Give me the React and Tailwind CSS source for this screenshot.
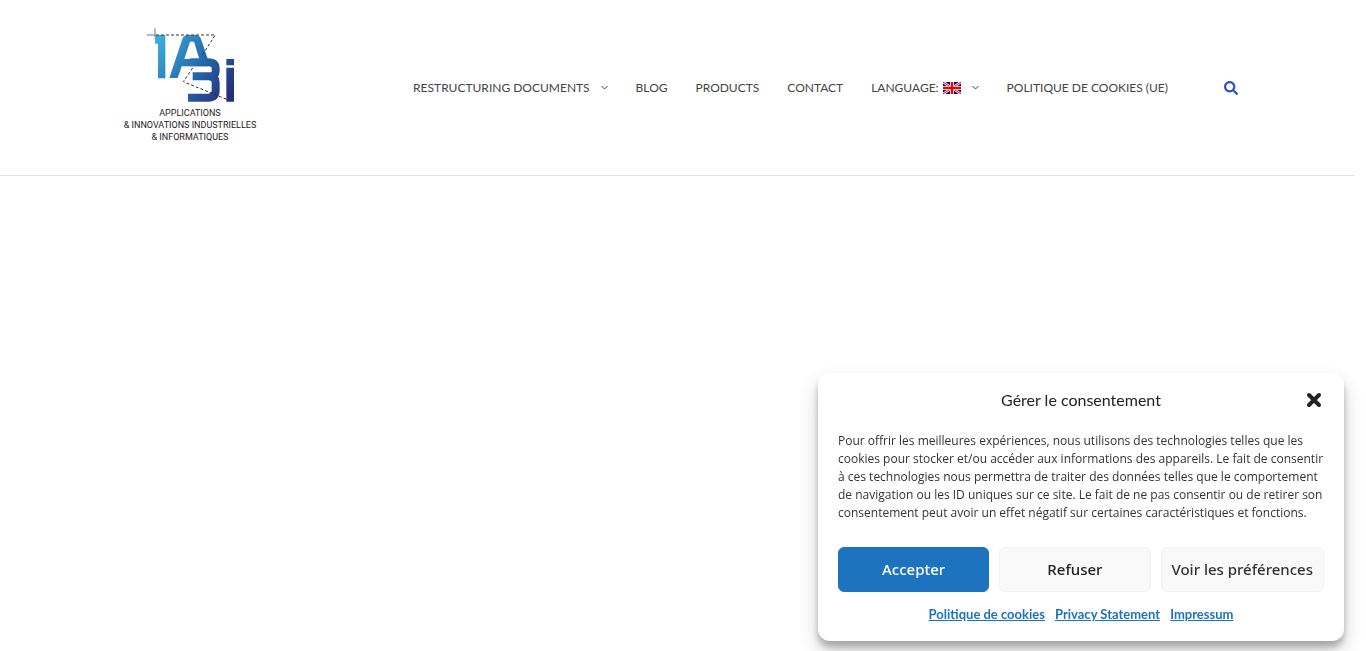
import { useState } from 'react'
import { FaSearch } from 'react-icons/fa'

const menu = [
  { label: 'RESTRUCTURING DOCUMENTS', sub: true },
  { label: 'BLOG' },
  { label: 'PRODUCTS' },
  { label: 'CONTACT' },
  { label: 'LANGUAGE:', flag: true, sub: true },
  { label: 'POLITIQUE DE COOKIES (UE)' },
]

const consentText = [
  'Pour offrir les meilleures expériences, nous utilisons des technologies telles que les',
  'cookies pour stocker et/ou accéder aux informations des appareils. Le fait de consentir',
  'à ces technologies nous permettra de traiter des données telles que le comportement',
  'de navigation ou les ID uniques sur ce site. Le fait de ne pas consentir ou de retirer son',
  'consentement peut avoir un effet négatif sur certaines caractéristiques et fonctions.',
]

const legalLinks = ['Politique de cookies', 'Privacy Statement', 'Impressum']

export default function App() {
  const [open, setOpen] = useState(true)

  return (
    <div className="min-h-screen bg-white font-['Lato',sans-serif]">
      <header className="mr-3 border-b border-[#e1e1e1]">
        <div className="mx-auto flex h-[175px] max-w-[1140px] items-center justify-between pr-[9px] pl-[15px]">
          <Logo />

          <div className="flex items-center gap-14">
            <nav aria-label="Menu principal">
              <ul className="flex items-center gap-7">
                {menu.map((item) => (
                  <li key={item.label}>
                    <a
                      href="#"
                      className="flex items-center text-xs leading-5 whitespace-nowrap text-[#444]"
                    >
                      {item.label}
                      {item.flag && <Flag />}
                      {item.sub && <Caret />}
                    </a>
                  </li>
                ))}
              </ul>
            </nav>

            <button type="button" aria-label="Rechercher" className="text-[#3452c4]">
              <FaSearch className="h-[14px] w-[14px]" />
            </button>
          </div>
        </div>
      </header>

      {open && <CookieBanner onClose={() => setOpen(false)} />}
    </div>
  )
}

function CookieBanner({ onClose }) {
  return (
    <div
      role="dialog"
      aria-labelledby="cookie-title"
      className="fixed right-[22px] bottom-[10px] w-full max-w-[526px] rounded-xl bg-white px-5 pt-4 pb-[17px] shadow-[0_10px_20px_rgba(0,0,0,0.19),0_6px_6px_rgba(0,0,0,0.23)]"
    >
      <div className="grid grid-cols-[20px_1fr_20px] items-center">
        <h2 id="cookie-title" className="col-start-2 text-center text-base leading-[22px] text-[#222]">
          Gérer le consentement
        </h2>
        <button type="button" aria-label="Fermer" onClick={onClose} className="text-[#222]">
          <svg viewBox="0 0 20 20" className="h-5 w-5" fill="none" stroke="currentColor" strokeWidth="4" strokeLinecap="round">
            <path d="M5 5l10 10M15 5l-10 10" />
          </svg>
        </button>
      </div>

      <p className="mt-[21px] font-['Open_Sans',sans-serif] text-xs leading-[18px] text-[#333]">
        {consentText.map((line) => (
          <span key={line} className="block">
            {line}
          </span>
        ))}
      </p>

      <div className="mt-[25px] flex gap-[10px] font-['Noto_Sans',sans-serif] text-[15px] font-medium">
        <button type="button" onClick={onClose} className="h-[45px] flex-1 rounded-md border border-[#1e73be] bg-[#1e73be] text-white">
          Accepter
        </button>
        <button type="button" onClick={onClose} className="h-[45px] flex-1 rounded-md border border-[#f2f2f2] bg-[#f9f9f9] text-[#222]">
          Refuser
        </button>
        <button type="button" className="h-[45px] rounded-md border border-[#f2f2f2] bg-[#f9f9f9] px-[10px] whitespace-nowrap text-[#333]">
          Voir les préférences
        </button>
      </div>

      <div className="mt-3 flex justify-center gap-[10px] text-[13px] leading-5 font-bold text-[#1e73be]">
        {legalLinks.map((label) => (
          <a key={label} href="#" className="underline">
            {label}
          </a>
        ))}
      </div>
    </div>
  )
}

function Logo() {
  return (
    <a href="#" className="mb-3 flex w-[136px] flex-col items-center font-['Roboto',sans-serif] text-[#222]">
      <svg viewBox="0 0 300 258" className="h-[86px] w-[100px]" fill="none" aria-label="IA3i">
        <defs>
          <linearGradient id="ink" gradientUnits="userSpaceOnUse" x1="45" y1="60" x2="270" y2="220">
            <stop offset="0" stopColor="#3bb0dc" />
            <stop offset="0.55" stopColor="#2468ab" />
            <stop offset="1" stopColor="#25307d" />
          </linearGradient>
        </defs>
        <path d="M20 42H45M45 22V50" stroke="#777" strokeWidth="3" />
        <path
          fill="url(#ink)"
          fillRule="evenodd"
          d="M45 42H76V172H54V68H45ZM88 171L127 54Q131 42 143 42H167Q179 42 183 54L203 113V136H125L113 171ZM150 62L133 114H178L162 62Z"
        />
        <path
          d="M150 124H205Q227 124 227 144V150Q227 166 208 166H158M208 166Q227 168 227 184V208Q227 230 205 230H144"
          stroke="url(#ink)"
          strokeWidth="24"
        />
        <path fill="url(#ink)" d="M259 114H282V133H259ZM259 140H282V242H259Z" />
        <path d="M48 42H226L187 102M158 141L130 182L260 235" stroke="#333" strokeWidth="3" strokeDasharray="9 6" />
      </svg>
      <span className="text-center text-[9px] leading-3 whitespace-nowrap">
        APPLICATIONS
        <br />
        &amp; INNOVATIONS INDUSTRIELLES
        <br />
        &amp; INFORMATIQUES
      </span>
    </a>
  )
}

function Flag() {
  return (
    <svg viewBox="0 0 18 12" className="ml-1 h-3 w-[18px]" aria-label="English">
      <path fill="#006" d="M0 0H18V12H0Z" />
      <path stroke="#fff" strokeWidth="2.6" d="M0 0L18 12M18 0L0 12" />
      <path stroke="#c00" strokeWidth="1" d="M0 0L18 12M18 0L0 12" />
      <path stroke="#fff" strokeWidth="4" d="M9 0V12M0 6H18" />
      <path stroke="#e00" strokeWidth="2.4" d="M9 0V12M0 6H18" />
    </svg>
  )
}

function Caret() {
  return (
    <svg viewBox="0 0 7 7" className="ml-[11px] h-[7px] w-[7px]" fill="none" stroke="#444" aria-hidden="true">
      <path d="M0.5 2L3.5 5L6.5 2" />
    </svg>
  )
}
